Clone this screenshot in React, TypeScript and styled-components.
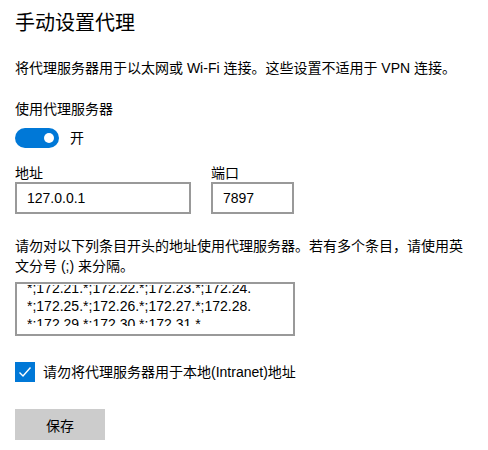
import React, { useLayoutEffect, useRef } from "react";
import styled, { createGlobalStyle } from "styled-components";

const GlobalStyle = createGlobalStyle`
    body {
        margin: 0;
        background: #ffffff;
        color: #000000;
        font-family: "Liberation Sans", "Noto Sans CJK SC", sans-serif;
        font-size: 14px;
    }
`;

const bypassLines = [
    "localhost;127.*;192.168.*;10.*;172.16.",
    "*;172.17.*;172.18.*;172.19.*;172.20.",
    "*;172.21.*;172.22.*;172.23.*;172.24.",
    "*;172.25.*;172.26.*;172.27.*;172.28.",
    "*;172.29.*;172.30.*;172.31.*",
];

export default function App() {
    const bypassRef = useRef<HTMLDivElement>(null);

    // the box is scrolled down a little, like in the settings page
    useLayoutEffect(() => {
        if (bypassRef.current) bypassRef.current.scrollTop = 42;
    }, []);

    return (
        <>
            <GlobalStyle />
            <Page>
                <Title>手动设置代理</Title>
                <Description>将代理服务器用于以太网或 Wi-Fi 连接。这些设置不适用于 VPN 连接。</Description>
                <SectionLabel>使用代理服务器</SectionLabel>
                <ToggleRow>
                    <Toggle $on>
                        <Knob />
                    </Toggle>
                    <span>开</span>
                </ToggleRow>
                <Fields>
                    <FieldLabel>地址</FieldLabel>
                    <FieldLabel>端口</FieldLabel>
                    <Input defaultValue="127.0.0.1" />
                    <Input defaultValue="7897" />
                </Fields>
                <Hint>请勿对以下列条目开头的地址使用代理服务器。若有多个条目，请使用英文分号 (;) 来分隔。</Hint>
                <BypassBox>
                    <BypassViewport ref={bypassRef}>
                        {bypassLines.map((line, i) => (
                            <BypassLine key={i}>{line}</BypassLine>
                        ))}
                    </BypassViewport>
                </BypassBox>
                <CheckRow>
                    <CheckBox>
                        <svg width="20" height="20" viewBox="0 0 20 20">
                            <polyline points="4.5,10.5 8,14 15.5,5.5" fill="none" stroke="#ffffff" strokeWidth="1.4" />
                        </svg>
                    </CheckBox>
                    <span>请勿将代理服务器用于本地(Intranet)地址</span>
                </CheckRow>
                <SaveButton>保存</SaveButton>
            </Page>
        </>
    );
}

const Page = styled.div`
    display: flex;
    flex-direction: column;
    align-items: flex-start;
    padding: 9px 15px 0;
`;

const Title = styled.h1`
    margin: 0;
    font-size: 20px;
    font-weight: normal;
    line-height: 28px;
`;

const Description = styled.div`
    margin-top: 21px;
    line-height: 20px;
    white-space: nowrap;
`;

const SectionLabel = styled.div`
    margin-top: 21px;
    line-height: 20px;
`;

const ToggleRow = styled.div`
    display: flex;
    align-items: center;
    gap: 11px;
    margin-top: 9px;
    height: 20px;
    line-height: 20px;
`;

const Toggle = styled.div<{ $on?: boolean }>`
    display: flex;
    align-items: center;
    justify-content: ${(p) => (p.$on ? "flex-end" : "flex-start")};
    box-sizing: border-box;
    width: 44px;
    height: 20px;
    padding: 0 5px;
    border-radius: 10px;
    background: ${(p) => (p.$on ? "#0078d7" : "#ffffff")};
`;

const Knob = styled.div`
    width: 10px;
    height: 10px;
    border-radius: 50%;
    background: #ffffff;
`;

const Fields = styled.div`
    display: grid;
    grid-template-columns: 176px 83px;
    column-gap: 20px;
    margin-top: 16px;
`;

const FieldLabel = styled.div`
    line-height: 18px;
`;

const Input = styled.input`
    box-sizing: border-box;
    width: 100%;
    height: 32px;
    margin: 0;
    padding: 0 10px;
    border: 2px solid #999999;
    background: #ffffff;
    color: #000000;
    font-family: inherit;
    font-size: 14px;
    outline: none;
`;

const Hint = styled.div`
    margin-top: 22px;
    max-width: 455px;
    line-height: 20px;
`;

const BypassBox = styled.div`
    box-sizing: border-box;
    width: 280px;
    height: 54px;
    margin-top: 6px;
    padding: 1px 10px 8px;
    border: 2px solid #999999;
`;

const BypassViewport = styled.div`
    height: 41px;
    overflow: hidden;
`;

const BypassLine = styled.div`
    line-height: 18px;
    white-space: nowrap;
`;

const CheckRow = styled.div`
    display: flex;
    align-items: center;
    gap: 8px;
    margin-top: 26px;
    height: 20px;
    line-height: 20px;
`;

const CheckBox = styled.div`
    display: flex;
    width: 20px;
    height: 20px;
    background: #0078d7;
`;

const SaveButton = styled.button`
    width: 90px;
    height: 31px;
    margin-top: 27px;
    padding: 0;
    border: none;
    background: #cccccc;
    color: #000000;
    font-family: inherit;
    font-size: 14px;
`;
